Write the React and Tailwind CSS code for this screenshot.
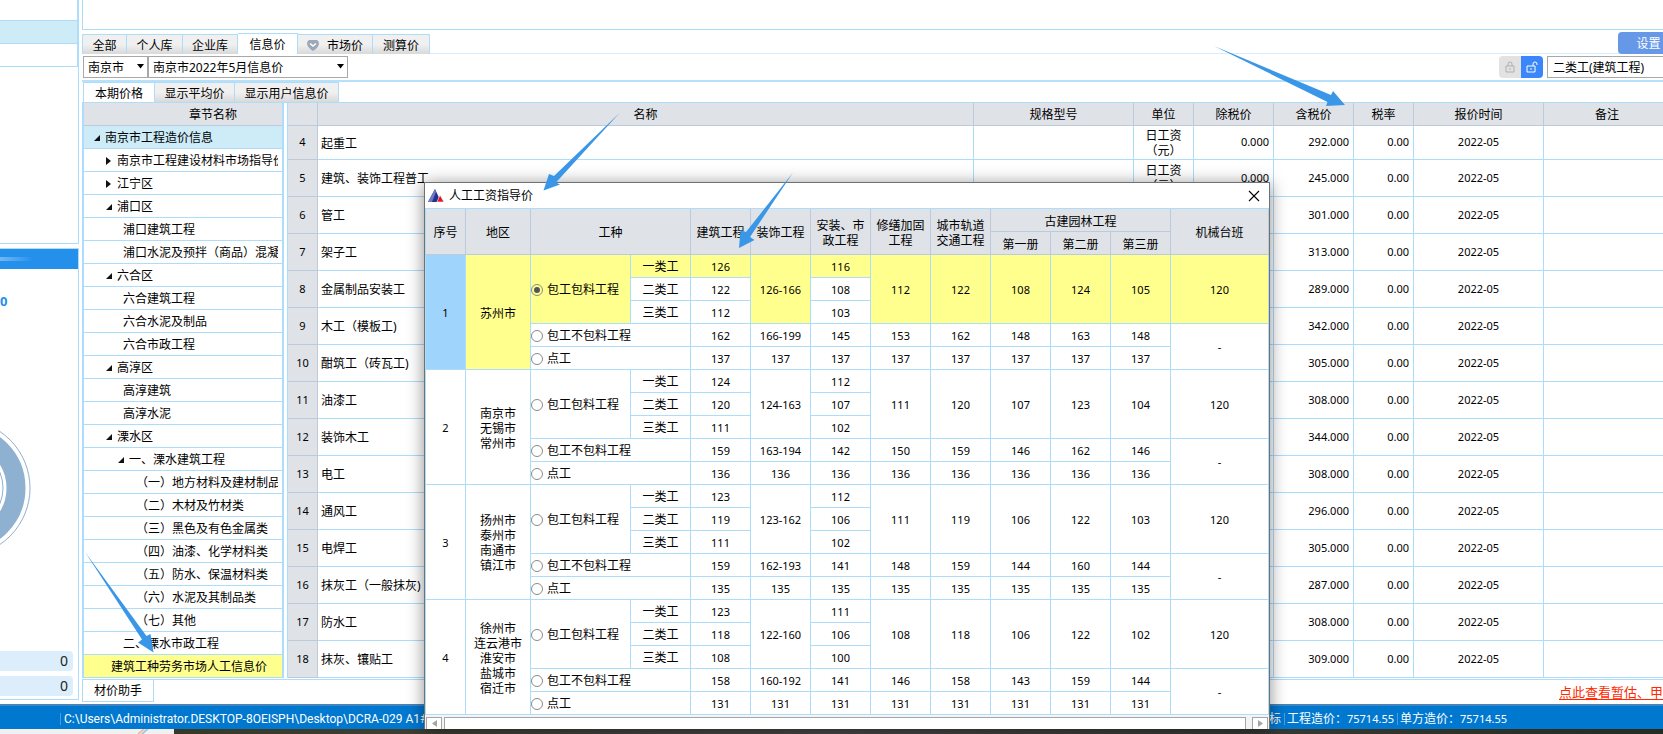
import React, { useState } from 'react';
import clsx from 'clsx';

const priceTabs = [
  { name: '全部', width: 'w-[45px]' },
  { name: '个人库', width: 'w-[56px]' },
  { name: '企业库', width: 'w-[55px]' },
  { name: '信息价', width: 'w-[60px]' },
  { name: '市场价', width: 'w-[75px]', gem: true },
  { name: '测算价', width: 'w-[57px]' },
];

const viewTabs = [
  { name: '本期价格', width: 'w-[72px]' },
  { name: '显示平均价', width: 'w-[80px]' },
  { name: '显示用户信息价', width: 'w-[104px]' },
];

// arrow: open / closed / undefined for leaf
const chapters = [
  { name: '南京市工程造价信息', pad: 'pl-[9px]', arrow: 'open', bg: 'bg-[#cdecf8]' },
  { name: '南京市工程建设材料市场指导价', pad: 'pl-[21px]', arrow: 'closed' },
  { name: '江宁区', pad: 'pl-[21px]', arrow: 'closed' },
  { name: '浦口区', pad: 'pl-[21px]', arrow: 'open' },
  { name: '浦口建筑工程', pad: 'pl-[39px]' },
  { name: '浦口水泥及预拌（商品）混凝', pad: 'pl-[39px]' },
  { name: '六合区', pad: 'pl-[21px]', arrow: 'open' },
  { name: '六合建筑工程', pad: 'pl-[39px]' },
  { name: '六合水泥及制品', pad: 'pl-[39px]' },
  { name: '六合市政工程', pad: 'pl-[39px]' },
  { name: '高淳区', pad: 'pl-[21px]', arrow: 'open' },
  { name: '高淳建筑', pad: 'pl-[39px]' },
  { name: '高淳水泥', pad: 'pl-[39px]' },
  { name: '溧水区', pad: 'pl-[21px]', arrow: 'open' },
  { name: '一、溧水建筑工程', pad: 'pl-[33px]', arrow: 'open' },
  { name: '（一）地方材料及建材制品', pad: 'pl-[52px]' },
  { name: '（二）木材及竹材类', pad: 'pl-[52px]' },
  { name: '（三）黑色及有色金属类', pad: 'pl-[52px]' },
  { name: '（四）油漆、化学材料类', pad: 'pl-[52px]' },
  { name: '（五）防水、保温材料类', pad: 'pl-[52px]' },
  { name: '（六）水泥及其制品类', pad: 'pl-[52px]' },
  { name: '（七）其他', pad: 'pl-[52px]' },
  { name: '二、溧水市政工程', pad: 'pl-[39px]' },
  { name: '建筑工种劳务市场人工信息价', pad: 'pl-[27px]', bg: 'bg-[#ffff8e]' },
];

const materials = [
  { no: 4, name: '起重工', price: '292.000' },
  { no: 5, name: '建筑、装饰工程普工', price: '245.000' },
  { no: 6, name: '管工', price: '301.000' },
  { no: 7, name: '架子工', price: '313.000' },
  { no: 8, name: '金属制品安装工', price: '289.000' },
  { no: 9, name: '木工（模板工)', price: '342.000' },
  { no: 10, name: '酣筑工（砖瓦工)', price: '305.000' },
  { no: 11, name: '油漆工', price: '308.000' },
  { no: 12, name: '装饰木工', price: '344.000' },
  { no: 13, name: '电工', price: '308.000' },
  { no: 14, name: '通风工', price: '296.000' },
  { no: 15, name: '电焊工', price: '305.000' },
  { no: 16, name: '抹灰工（一般抹灰)', price: '287.000' },
  { no: 17, name: '防水工', price: '308.000' },
  { no: 18, name: '抹灰、镶贴工', price: '309.000' },
];

// build / install: three worker grades, rest: one value for the three grades
const wages = [
  {
    cities: ['苏州市'],
    build: [126, 122, 112],
    install: [116, 108, 103],
    deco: '126-166',
    rest: [112, 122, 108, 124, 105],
    labor: [162, '166-199', 145, 153, 162, 148, 163, 148],
    daily: 137,
  },
  {
    cities: ['南京市', '无锡市', '常州市'],
    build: [124, 120, 111],
    install: [112, 107, 102],
    deco: '124-163',
    rest: [111, 120, 107, 123, 104],
    labor: [159, '163-194', 142, 150, 159, 146, 162, 146],
    daily: 136,
  },
  {
    cities: ['扬州市', '泰州市', '南通市', '镇江市'],
    build: [123, 119, 111],
    install: [112, 106, 102],
    deco: '123-162',
    rest: [111, 119, 106, 122, 103],
    labor: [159, '162-193', 141, 148, 159, 144, 160, 144],
    daily: 135,
  },
  {
    cities: ['徐州市', '连云港市', '淮安市', '盐城市', '宿迁市'],
    build: [123, 118, 108],
    install: [111, 106, 100],
    deco: '122-160',
    rest: [108, 118, 106, 122, 102],
    labor: [158, '160-192', 141, 146, 158, 143, 159, 144],
    daily: 131,
  },
];

const grades = ['一类工', '二类工', '三类工'];

const TreeArrow = ({ kind }) => (
  <svg className="w-3 h-3 shrink-0" viewBox="0 0 12 12" fill="#111">
    {kind === 'open' ? <path d="M7 3v6H1z" /> : <path d="M1 2l5 4-5 4z" />}
  </svg>
);

const Tab = ({ tab, active, onClick }) => (
  <button
    onClick={onClick}
    className={clsx(
      tab.width,
      '-mb-px pt-[2px] flex items-center justify-center gap-1 border-t border-r border-[#aedcfb] first:border-l',
      active ? 'h-[21px] bg-white' : 'h-5 bg-linear-to-b from-[#f0f0f0] from-50% to-[#d9d9d9]'
    )}
  >
    {tab.gem && (
      <svg className="w-3 h-3 mr-1" viewBox="0 0 12 12">
        <path d="M2 0h8q2 1 2 4-1 4-6 7Q1 8 0 4q0-3 2-4z" fill="#9ca8b8" />
        <path d="M3 3.500l3 2.500 3-2.500" fill="none" stroke="#fff" strokeWidth="1.600" />
      </svg>
    )}
    {tab.name}
  </button>
);

const Dropdown = ({ label, width, children }) => (
  <div className={clsx('relative h-[22px]', width)}>
    <select
      aria-label={label}
      className="w-full h-full appearance-none border border-[#a8a8a8] bg-white pt-px pl-1 outline-none"
    >
      {children}
    </select>
    <svg className="absolute right-1 top-2 w-[7px] h-[5px] pointer-events-none" viewBox="0 0 7 5">
      <path d="M0 0h7L3.500 4.500z" fill="#000" />
    </svg>
  </div>
);

const SidePanel = () => (
  <aside className="w-[79px] shrink-0 flex flex-col gap-1 pb-1">
    <div className="h-[244px] border-r border-b border-[#aedcfb]">
      <div className="h-[67px] border-r border-b border-[#aedcfb] pt-5">
        <div className="h-6 border-y border-[#aedcfb] bg-[#cdecf8]"></div>
      </div>
    </div>
    <div className="flex-1 border-r border-b border-t border-[#aedcfb] flex flex-col overflow-hidden">
      <div className="h-5 bg-[#2590eb] flex items-center">
        <div className="w-8 h-1 bg-linear-to-r from-[#6fb8f4] to-[#2590eb]"></div>
      </div>
      <div className="h-[68px] pt-6 text-[13px] font-bold text-[#2590eb]">0</div>
      <svg className="w-[78px] h-[314px] shrink-0" viewBox="0 0 78 314">
        <g fill="none" transform="translate(-38 151)">
          <circle r="68" stroke="#8fb1d1" />
          <circle r="54" stroke="#8fb1d1" strokeWidth="19" />
          <circle r="41" stroke="#8fb1d1" />
        </g>
      </svg>
      <div className="flex flex-col gap-[5px] pr-[5px] text-right text-sm leading-5 text-[#222]">
        <div className="h-5 pr-[5px] rounded-r bg-[#dceefc]">0</div>
        <div className="h-5 pr-[5px] rounded-r bg-[#dceefc]">0</div>
      </div>
    </div>
  </aside>
);

const ChapterTree = () => (
  <div className="w-[202px] shrink-0 border-l-2 border-r-2 border-[#aedcfb]">
    <div className="h-[23px] border-b border-[#bccadb] bg-[#dfe2e7] pt-[2px] pl-[60px] flex items-center justify-center">
      章节名称
    </div>
    <ul>
      {chapters.map((item) => (
        <li
          key={item.name}
          className={clsx(
            'h-[23px] flex items-center border-b border-[#aedcfb] pt-[2px] pr-1',
            item.pad,
            item.bg
          )}
        >
          {item.arrow && <TreeArrow kind={item.arrow} />}
          <span className="overflow-hidden whitespace-nowrap">{item.name}</span>
        </li>
      ))}
    </ul>
  </div>
);

const th = 'border-r border-b border-[#bccadb] bg-[#dfe2e7] font-normal p-0 pt-[2px]';
const td = 'border-r border-b border-[#aedcfb] pt-[2px] pb-0';
const plain = 'border-r border-b border-[#aedcfb] py-0 text-[11px]';

const MaterialTable = () => (
  <table className="flex-1 table-fixed border-separate border-spacing-0 border-l border-[#aedcfb]">
    <colgroup>
      <col className="w-[30px]" />
      <col className="w-[656px]" />
      <col className="w-[160px]" />
      <col className="w-[60px]" />
      <col className="w-[80px]" />
      <col className="w-[80px]" />
      <col className="w-[60px]" />
      <col className="w-[130px]" />
      <col />
    </colgroup>
    <thead>
      <tr className="h-[23px]">
        {['', '名称', '规格型号', '单位', '除税价', '含税价', '税率', '报价时间', '备注'].map((name) => (
          <th key={name} className={th}>{name}</th>
        ))}
      </tr>
    </thead>
    <tbody>
      {materials.map((item, index) => (
        <tr key={item.no} className={index === 0 ? 'h-[34px]' : 'h-[37px]'}>
          <td className="border-r border-b border-[#bccadb] bg-[#dfe2e7] p-0 text-center text-[11px]">{item.no}</td>
          <td className={clsx(td, 'pl-[3px]')}>{item.name}</td>
          <td className={td}></td>
          <td className="border-r border-b border-[#aedcfb] p-0 text-center leading-[15px]">日工资<br />（元）</td>
          <td className={clsx(plain, 'pr-1 text-right')}>0.000</td>
          <td className={clsx(plain, 'pr-1 text-right')}>{item.price}</td>
          <td className={clsx(plain, 'pr-1 text-right')}>0.00</td>
          <td className={clsx(plain, 'text-center')}>2022-05</td>
          <td className={td}></td>
        </tr>
      ))}
    </tbody>
  </table>
);

const WageRows = ({ wage, index, picked, onPick }) => {
  const first = index === 0;
  const yellow = first && 'bg-[#ffff8e]';
  const num = clsx(td, 'text-center text-[11px]');

  const option = (name) => (
    <label className="flex items-center gap-1">
      <input
        type="radio"
        name="wage"
        checked={picked === `${index}-${name}`}
        onChange={() => onPick(`${index}-${name}`)}
        className="w-3 h-3 shrink-0 appearance-none rounded-full border border-[#8a8a8a] bg-white p-[2px] bg-clip-content checked:bg-[#555]"
      />
      {name}
    </label>
  );

  return (
    <>
      {grades.map((grade, i) => (
        <tr key={grade} className="h-[23px]">
          {i === 0 && (
            <>
              <td rowSpan={5} className={clsx(num, first && 'bg-[#9fd5fd]')}>{index + 1}</td>
              <td rowSpan={5} className={clsx(td, yellow, 'text-center leading-[15px]')}>
                {wage.cities.map((city) => <div key={city}>{city}</div>)}
              </td>
              <td rowSpan={3} className={clsx(td, yellow)}>{option('包工包料工程')}</td>
            </>
          )}
          <td className={clsx(td, 'text-center', i === 0 && yellow)}>{grade}</td>
          <td className={clsx(num, i === 0 && yellow)}>{wage.build[i]}</td>
          {i === 0 && <td rowSpan={3} className={clsx(num, yellow)}>{wage.deco}</td>}
          <td className={clsx(num, i === 0 && yellow)}>{wage.install[i]}</td>
          {i === 0 && wage.rest.map((value, n) => (
            <td key={n} rowSpan={3} className={clsx(num, yellow)}>{value}</td>
          ))}
          {i === 0 && <td rowSpan={3} className={clsx(num, yellow)}>120</td>}
        </tr>
      ))}
      <tr className="h-[23px]">
        <td colSpan={2} className={td}>{option('包工不包料工程')}</td>
        {wage.labor.map((value, n) => <td key={n} className={num}>{value}</td>)}
        <td rowSpan={2} className={num}>-</td>
      </tr>
      <tr className="h-[23px]">
        <td colSpan={2} className={td}>{option('点工')}</td>
        {wage.labor.map((value, n) => <td key={n} className={num}>{wage.daily}</td>)}
      </tr>
    </>
  );
};

const WageDialog = () => {
  const [picked, setPicked] = useState('0-包工包料工程');

  return (
    <div
      role="dialog"
      aria-label="人工工资指导价"
      className="absolute left-[424px] top-[182px] w-[846px] border border-b-0 border-[#6f7174] bg-white shadow-[0_2px_16px_rgba(0,0,0,0.45)]"
    >
      <div className="h-[25px] flex items-center pl-[3px] pr-[9px]">
        <svg className="w-4 h-[14px]" viewBox="0 0 16 14">
          <path d="M7 0l6 13H0z" fill="#23318f" />
          <path d="M7 0L0 13h4L8 3z" fill="#6c7bc4" />
          <path d="M12 6l4 7H9z" fill="#e0142a" stroke="#fff" strokeWidth="0.600" />
        </svg>
        <h2 className="ml-[5px]">人工工资指导价</h2>
        <button aria-label="关闭" className="ml-auto">
          <svg className="w-3 h-3" viewBox="0 0 12 12" stroke="#000" strokeWidth="1.100">
            <path d="M1 1l10 10M11 1L1 11" />
          </svg>
        </button>
      </div>
      <table className="w-full table-fixed border-separate border-spacing-0 border-t border-l border-[#aedcfb]">
        <colgroup>
          <col className="w-10" />
          <col className="w-[65px]" />
          <col className="w-[100px]" />
          {Array.from({ length: 9 }, (_, i) => <col key={i} className="w-[60px]" />)}
          <col />
        </colgroup>
        <thead className="leading-[15px]">
          <tr className="h-[23px]">
            <th rowSpan={2} className={th}>序号</th>
            <th rowSpan={2} className={th}>地区</th>
            <th rowSpan={2} colSpan={2} className={th}>工种</th>
            <th rowSpan={2} className={th}>建筑工程</th>
            <th rowSpan={2} className={th}>装饰工程</th>
            <th rowSpan={2} className={th}>安装、市<br />政工程</th>
            <th rowSpan={2} className={th}>修缮加固<br />工程</th>
            <th rowSpan={2} className={th}>城市轨道<br />交通工程</th>
            <th colSpan={3} className={th}>古建园林工程</th>
            <th rowSpan={2} className={th}>机械台班</th>
          </tr>
          <tr className="h-[23px]">
            <th className={th}>第一册</th>
            <th className={th}>第二册</th>
            <th className={th}>第三册</th>
          </tr>
        </thead>
        <tbody>
          {wages.map((wage, index) => (
            <WageRows key={index} wage={wage} index={index} picked={picked} onPick={setPicked} />
          ))}
        </tbody>
      </table>
      <div className="h-[14px] pt-[2px] px-px flex gap-[2px] bg-[#f4f4f4]">
        <button aria-label="向左" className="w-4 border border-b-0 border-[#a5a5a5] bg-white flex items-center justify-center">
          <svg className="w-[5px] h-[7px]" viewBox="0 0 5 7"><path d="M5 0v7L0 3.500z" fill="#a5a5a5" /></svg>
        </button>
        <div className="flex-1 mr-1 border border-b-0 border-[#a5a5a5] bg-white"></div>
        <button aria-label="向右" className="w-4 border border-b-0 border-[#a5a5a5] bg-white flex items-center justify-center">
          <svg className="w-[5px] h-[7px]" viewBox="0 0 5 7"><path d="M0 0v7l5-3.500z" fill="#a5a5a5" /></svg>
        </button>
      </div>
    </div>
  );
};

// hand-drawn pointers over the window
const Pointers = () => (
  <svg
    className="absolute left-0 top-0 w-[1663px] h-[734px] pointer-events-none"
    viewBox="0 0 1663 734"
    fill="#3a97e8"
  >
    <path d="M85 552L142 639.500l-4 3 15.500 10-3-18.500-4 2z" />
    <path d="M620 112.500L554 176l-5-2-5.500 16.500 16.500-6-4-2z" />
    <path d="M793 172.500L746 232l-5.500-2-1.500 18 15.500-8-4.500-3z" />
    <path d="M1214 46L1331 95l2-4 12 14-19 1 1.500-4z" />
  </svg>
);

const App = () => {
  const [priceTab, setPriceTab] = useState('信息价');
  const [viewTab, setViewTab] = useState('本期价格');

  return (
    <div className="relative min-h-screen flex flex-col overflow-hidden bg-white text-black text-xs font-['Noto_Sans','Noto_Sans_CJK_SC',sans-serif]">
      <div className="flex-1 flex gap-[3px]">
        <SidePanel />

        <main className="flex-1 min-w-0 -mr-4 flex flex-col">
          <div className="h-[30px] border-l border-b border-[#aedcfb]"></div>

          <div className="h-6 flex items-end border-b border-[#d5edfc]">
            {priceTabs.map((tab) => (
              <Tab key={tab.name} tab={tab} active={tab.name === priceTab} onClick={() => setPriceTab(tab.name)} />
            ))}
            <button className="ml-auto -mb-px w-[61px] h-[22px] pt-[2px] rounded-sm bg-[#6798e8] text-white">设置</button>
          </div>

          <div className="h-[26px] flex items-center pl-px">
            <Dropdown label="城市" width="w-[65px]">
              <option>南京市</option>
            </Dropdown>
            <Dropdown label="期刊" width="w-[200px]">
              <option>南京市2022年5月信息价</option>
            </Dropdown>
            <button aria-label="锁定" className="ml-auto w-[22px] h-[22px] rounded-l-sm bg-[#e2e2e2] flex items-center justify-center">
              <svg className="w-3 h-3" viewBox="0 0 12 12" fill="none" stroke="#b0b0b0">
                <path d="M2 5h8v6H2zM4 5V3q0-2 2-2t2 2v2M6 7v2" />
              </svg>
            </button>
            <button aria-label="解锁" className="w-[22px] h-[22px] rounded-r-sm bg-[#3b86fb] flex items-center justify-center">
              <svg className="w-3 h-3" viewBox="0 0 12 12" fill="none" stroke="#fff">
                <path d="M1 5h8v6H1zM7 5V3q0-2 2-2t2 2v1M5 7v2" />
              </svg>
            </button>
            <select
              aria-label="工种类别"
              className="ml-1 w-[132px] h-[22px] appearance-none border border-[#a8a8a8] bg-white pt-px pl-[5px]"
            >
              <option>二类工(建筑工程)</option>
            </select>
          </div>

          <div className="h-[22px] flex items-start border-t-2 border-[#b7e0fa] pl-px">
            {viewTabs.map((tab) => (
              <Tab key={tab.name} tab={tab} active={tab.name === viewTab} onClick={() => setViewTab(tab.name)} />
            ))}
          </div>

          <div className="mr-2 flex items-start gap-[3px] border-t border-[#aedcfb]">
            <ChapterTree />
            <MaterialTable />
          </div>

          <div className="mt-px border-t border-[#aedcfb] pr-4 h-[22px] flex items-start justify-between">
            <button className="w-[72px] h-[22px] border border-t-0 border-[#aedcfb]">材价助手</button>
            <a href="#estimate" className="mt-1 text-[13px] text-[#ff2a00] underline underline-offset-2">点此查看暂估、甲</a>
          </div>
        </main>
      </div>

      <footer>
        <div className="h-[25px] border-t-2 border-[#4484bc] bg-[#0078d0] pt-[2px] pl-[60px] pr-[156px] flex items-center justify-between text-white">
          <span className="border-l border-[#4c9bdb] pl-[3px] leading-3 font-['Roboto',sans-serif]">
            C:\Users\Administrator.DESKTOP-8OEISPH\Desktop\DCRA-029 A1#C
          </span>
          <span className="flex gap-[3px] leading-3">
            <span>标</span>
            <span className="border-l border-[#4c9bdb] pl-[2px]">工程造价：<span className="text-[11px]">75714.55</span></span>
            <span className="border-l border-[#4c9bdb] pl-[2px]">单方造价：<span className="text-[11px]">75714.55</span></span>
          </span>
        </div>
        <div className="h-[5px] flex bg-linear-to-r from-[#33351f] via-[#484848] to-[#262c20]">
          <div className="w-[174px] bg-[#f1f1f1] pl-[138px]">
            <svg className="w-3 h-[5px]" viewBox="0 0 12 5" fill="none" strokeWidth="1.500">
              <path d="M0 5L6 0" stroke="#f3a6c8" />
              <path d="M2 5L8 0" stroke="#f5e08a" />
              <path d="M4 5L10 0" stroke="#8fc6f5" />
            </svg>
          </div>
        </div>
      </footer>

      <WageDialog />
      <Pointers />
    </div>
  );
};

export default App;
